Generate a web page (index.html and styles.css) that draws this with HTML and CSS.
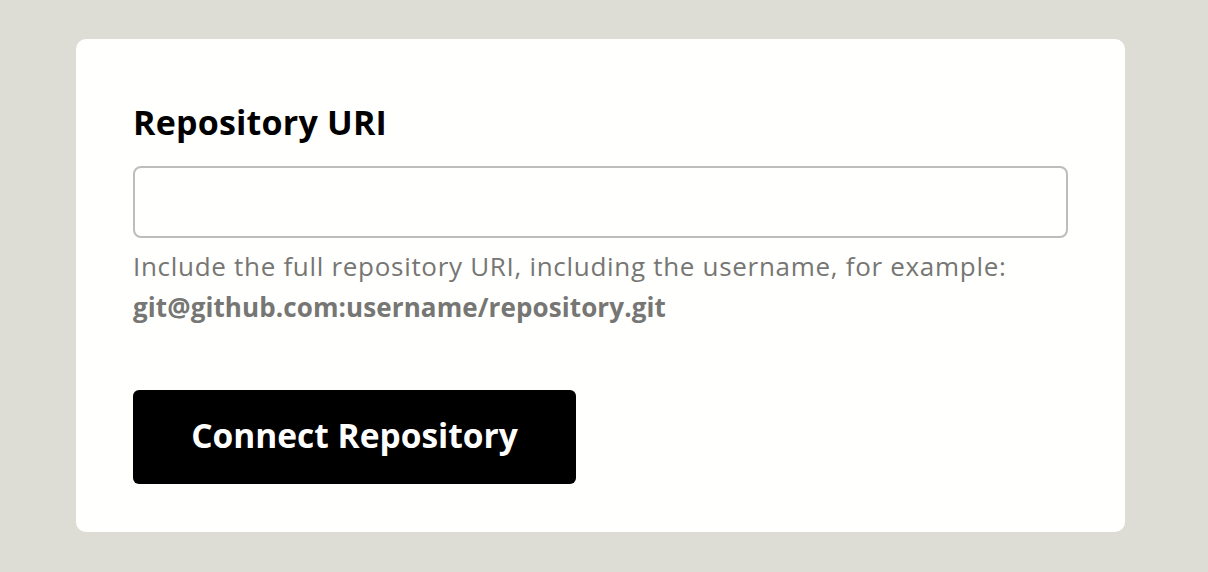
FILE: index.html
```html
<!DOCTYPE html>
<html>
<head>
<meta charset="utf-8">
<link rel="stylesheet" href="styles.css">
</head>
<body>
<div class="card">
  <label class="label" for="uri">Repository URI</label>
  <input class="input" id="uri" type="text">
  <p class="help">Include the full repository URI, including the username, for example:<br><strong>git@github.com:username/repository.git</strong></p>
  <button class="btn">Connect Repository</button>
</div>
</body>
</html>
```
FILE: styles.css
```css
html, body {
  margin: 0;
  padding: 0;
}
body {
  background: #dddcd5;
  font-family: "Open Sans", "Noto Sans", sans-serif;
  padding: 39px 83px 40px 76px;
}
.card {
  background: #fffffd;
  border-radius: 10px;
  padding: 61px 57px 48px 57px;
  display: flex;
  flex-direction: column;
  align-items: flex-start;
}
.label {
  font-size: 34px;
  font-weight: 700;
  color: #000;
  line-height: 44px;
  letter-spacing: 0.2px;
}
.input {
  margin-top: 22px;
  box-sizing: border-box;
  width: 100%;
  height: 72px;
  border: 2px solid #bdbdb9;
  border-radius: 8px;
  background: #fffffd;
}
.help {
  margin: 8px 0 0;
  font-size: 26px;
  line-height: 41px;
  color: #767674;
  letter-spacing: 0.7px;
}
.help strong {
  font-weight: 700;
  letter-spacing: 0.1px;
}
.btn {
  margin-top: 62px;
  width: 443px;
  height: 94px;
  border: 0;
  border-radius: 6px;
  background: #000;
  color: #fff;
  font-family: inherit;
  font-size: 33.5px;
  font-weight: 700;
  line-height: 40px;
  padding: 0 0 4px;
}
```
